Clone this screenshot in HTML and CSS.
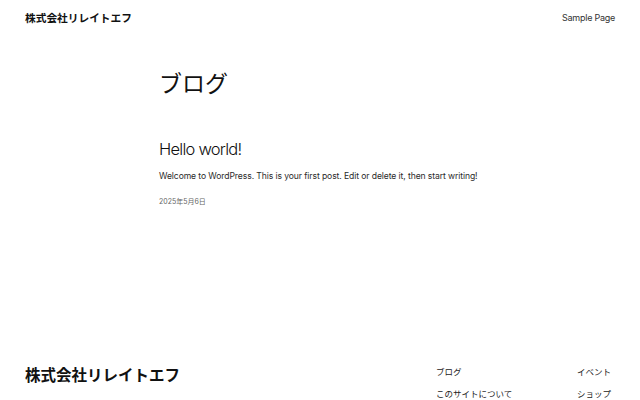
FILE: index.html
```html
<!DOCTYPE html>
<html lang="ja">
<head>
<meta charset="utf-8">
<title>ブログ – 株式会社リレイトエフ</title>
<link rel="stylesheet" href="styles.css">
</head>
<body>
<header class="site-header">
  <a class="site-title" href="#">株式会社リレイトエフ</a>
  <nav class="header-nav"><a href="#">Sample Page</a></nav>
</header>
<main class="site-main">
  <h1 class="page-title">ブログ</h1>
  <article class="post">
    <h2 class="post-title">Hello world!</h2>
    <p class="post-excerpt">Welcome to WordPress. This is your first post. Edit or delete it, then start writing!</p>
    <time class="post-date">2025年5月6日</time>
  </article>
</main>
<footer class="site-footer">
  <a class="footer-title" href="#">株式会社リレイトエフ</a>
  <nav class="footer-nav">
    <a href="#">ブログ</a>
    <a href="#">イベント</a>
    <a href="#">このサイトについて</a>
    <a href="#">ショップ</a>
  </nav>
</footer>
</body>
</html>
```
FILE: styles.css
```css
html, body {
  margin: 0;
  padding: 0;
  background: #fff;
}
body {
  font-family: "Inter", "Noto Sans CJK JP", sans-serif;
  color: #111;
  width: 640px;
  height: 400px;
  overflow: hidden;
}
a {
  color: inherit;
  text-decoration: none;
}
.site-header {
  height: 34px;
  padding: 0 25px;
  display: flex;
  align-items: center;
  justify-content: space-between;
}
.site-title {
  font-family: "Noto Sans CJK JP", sans-serif;
  font-weight: 700;
  font-size: 10.7px;
  color: #111;
}
.header-nav {
  font-size: 9px;
  color: #333;
  letter-spacing: -0.25px;
}
.site-main {
  box-sizing: border-box;
  height: 331px;
  width: 322px;
  margin: 0 auto;
  padding-top: 35px;
}
.page-title {
  margin: 0;
  font-family: "Noto Sans CJK JP", sans-serif;
  font-weight: 400;
  font-size: 23px;
  line-height: 1.2;
  color: #111;
}
.post {
  margin-top: 43px;
  display: flex;
  flex-direction: column;
}
.post-title {
  margin: 0;
  font-weight: 300;
  font-size: 16.5px;
  line-height: 1.2;
  letter-spacing: -0.75px;
  color: #111;
}
.post-excerpt {
  margin: 11px 0 0;
  font-size: 8.6px;
  line-height: 1.5;
  letter-spacing: -0.1px;
  color: #2a2a2a;
}
.post-date {
  margin-top: 14px;
  font-size: 7px;
  line-height: 1.4;
  color: #666;
}
.site-footer {
  padding: 0 25px;
  display: flex;
  align-items: flex-start;
  justify-content: space-between;
}
.footer-title {
  font-family: "Noto Sans CJK JP", sans-serif;
  font-weight: 700;
  font-size: 15.5px;
  line-height: 1.2;
  color: #111;
}
.footer-nav {
  display: grid;
  grid-template-columns: 141px 38px;
  row-gap: 9px;
  font-family: "Noto Sans CJK JP", sans-serif;
  font-size: 8.5px;
  line-height: 13px;
  color: #222;
  white-space: nowrap;
}
```
